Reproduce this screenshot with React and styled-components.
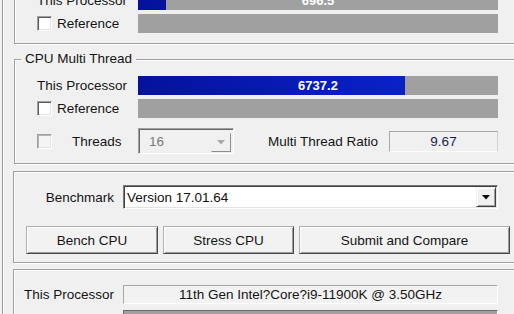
import React from 'react';
import styled, { createGlobalStyle } from 'styled-components';

const GlobalStyle = createGlobalStyle`
  html, body {
    margin: 0;
    padding: 0;
    background: #f0f0f0;
    overflow: hidden;
  }
  body {
    font-family: "Liberation Sans", Arial, sans-serif;
    font-size: 13.5px;
    color: #141414;
  }
`;

const MAX_SCORE = 9080;

const Window = styled.div`
  margin-left: 2px;
  width: 540px;
  height: 314px;
  overflow: hidden;
  border-left: 1px solid #9c9c9c;
  box-shadow: inset 1px 0 #fff;
  display: flex;
  flex-direction: column;
`;

const Sheet = styled.div`
  margin-top: -34px;
  display: flex;
  flex-direction: column;
`;

const Group = styled.fieldset`
  margin: ${p => (p.$first ? 0 : 7)}px 0 0 11px;
  padding: 9px 0 ${p => p.$pb}px 22px;
  border: 1px solid #a0a0a0;
  box-shadow: inset 1px 1px #fff, 1px 1px #fff;
  min-width: 0;
  display: flex;
  flex-direction: column;
  gap: 4px;
`;

const Caption = styled.legend`
  padding: 0 4px;
  margin-left: -16px;
  line-height: 16px;
  background: #f0f0f0;
`;

const BarRow = styled.div`
  display: grid;
  grid-template-columns: 101px 360px;
  align-items: center;
  height: 19px;
`;

const Label = styled.span`
  display: flex;
  align-items: center;
  gap: ${p => p.$gap || 5}px;
  white-space: nowrap;
`;

const Check = styled.span`
  flex: none;
  width: 13px;
  height: 13px;
  background: ${p => (p.$disabled ? '#f4f4f4' : '#fff')};
  border: 1px solid;
  border-color: #a0a0a0 #fff #fff #a0a0a0;
  box-shadow: inset 1px 1px ${p => (p.$disabled ? '#b4b4b4' : '#5c5c5c')},
    inset -1px -1px #e3e3e3;
`;

const Bar = styled.div`
  display: grid;
  height: 19px;
  background: #a0a0a0;
`;

const Fill = styled.div`
  grid-area: 1 / 1;
  justify-self: start;
  height: 100%;
  background: linear-gradient(to right, #06129c, #0a26d8);
  background-size: 360px 100%;
`;

const BarValue = styled.span`
  grid-area: 1 / 1;
  justify-self: center;
  align-self: center;
  color: #fff;
  font-weight: bold;
  font-size: 13px;
`;

const OptionRow = styled.div`
  display: grid;
  grid-template-columns: 101px 360px;
  align-items: center;
  height: 26px;
  margin-top: 6px;
`;

const OptionCell = styled.div`
  display: flex;
  align-items: center;
`;

const Combo = styled.div`
  box-sizing: border-box;
  width: 96px;
  height: 26px;
  display: flex;
  align-items: center;
  justify-content: space-between;
  padding: 0 2px 0 10px;
  border: 1px solid;
  border-color: #a0a0a0 #fff #fff #a0a0a0;
  box-shadow: inset 1px 1px #696969;
  color: #7a7a7a;
`;

const ComboButton = styled.span`
  box-sizing: border-box;
  width: 20px;
  height: 19px;
  margin-top: 2px;
  display: flex;
  align-items: center;
  justify-content: center;
  border: 1px solid;
  border-color: #f0f0f0 #8c8c8c #8c8c8c #f0f0f0;
  background: ${p => (p.$disabled ? '#f0f0f0' : '#f0f0f0')};
`;

const RatioLabel = styled.span`
  margin-left: auto;
  margin-right: 11px;
  white-space: nowrap;
`;

const RatioBox = styled.div`
  box-sizing: border-box;
  width: 109px;
  height: 21px;
  display: flex;
  align-items: center;
  justify-content: center;
  border: 1px solid;
  border-color: #a8a8a8 #d0d0d0 #fff #a8a8a8;
  color: #1d1d4c;
`;

const Panel = styled.div`
  margin: ${p => p.$mt}px 0 0 10px;
  padding: ${p => p.$pt}px 0 ${p => p.$pb}px 0;
  border: 1px solid #a0a0a0;
  box-shadow: inset 1px 1px #fff, 1px 1px #fff;
  display: flex;
  flex-direction: column;
  gap: ${p => p.$gap || 0}px;
`;

const FieldRow = styled.div`
  display: grid;
  grid-template-columns: 100px 375px;
  column-gap: 9px;
  align-items: center;
  height: ${p => p.$h}px;
`;

const FieldLabel = styled.span`
  text-align: right;
  white-space: nowrap;
`;

const Select = styled.div`
  box-sizing: border-box;
  height: 24px;
  display: flex;
  align-items: center;
  justify-content: space-between;
  padding: 0 1px 0 3px;
  background: #fff;
  border: 1px solid;
  border-color: #7a7a7a #fff #fff #7a7a7a;
  box-shadow: inset 1px 1px #404040, inset -1px -1px #e3e3e3;
  color: #111;
`;

const SelectButton = styled.span`
  box-sizing: border-box;
  width: 20px;
  height: 20px;
  display: flex;
  align-items: center;
  justify-content: center;
  background: #f0f0f0;
  border: 1px solid;
  border-color: #f0f0f0 #404040 #404040 #f0f0f0;
  box-shadow: inset 1px 1px #fff, inset -1px -1px #a0a0a0;
`;

const ButtonRow = styled.div`
  display: flex;
  gap: 5px;
  margin: 17px 0 0 12px;
`;

const Button = styled.button`
  box-sizing: border-box;
  width: ${p => p.$w}px;
  height: 28px;
  padding: 0;
  font: inherit;
  color: #141414;
  background: #f2f2f2;
  border: 1px solid;
  border-color: #b0b0b0 #4a4a4a #4a4a4a #b0b0b0;
  box-shadow: inset 1px 1px #fff, inset -1px -1px #9a9a9a;
`;

const InfoField = styled.div`
  box-sizing: border-box;
  height: 19px;
  display: flex;
  align-items: center;
  justify-content: center;
  background: ${p => (p.$gray ? '#a0a0a0' : '#f2f2f2')};
  border: 1px solid;
  border-color: ${p =>
    p.$gray ? '#6a6a6a #fff #fff #6a6a6a' : '#a8a8a8 #fff #fff #a8a8a8'};
  color: #141414;
`;

const Arrow = ({ color }) => (
  <svg width="8" height="5" viewBox="0 0 8 5">
    <polygon points="0,0 8,0 4,4.5" fill={color} />
  </svg>
);

const ScoreRow = ({ label, value }) => (
  <BarRow>
    <Label>{label}</Label>
    <Bar>
      <Fill style={{ width: `${(value / MAX_SCORE) * 100}%` }} />
      <BarValue>{value.toFixed(1)}</BarValue>
    </Bar>
  </BarRow>
);

const ReferenceRow = () => (
  <BarRow>
    <Label>
      <Check />
      Reference
    </Label>
    <Bar />
  </BarRow>
);

export default function App() {
  return (
    <>
      <GlobalStyle />
      <Window>
        <Sheet>
          <Group $first $pb={10}>
            <Caption>CPU Single Thread</Caption>
            <ScoreRow label="This Processor" value={696.5} />
            <ReferenceRow />
          </Group>

          <Group $pb={9}>
            <Caption>CPU Multi Thread</Caption>
            <ScoreRow label="This Processor" value={6737.2} />
            <ReferenceRow />
            <OptionRow>
              <Label $gap={20}>
                <Check $disabled />
                Threads
              </Label>
              <OptionCell>
                <Combo>
                  16
                  <ComboButton $disabled>
                    <Arrow color="#a8a8a8" />
                  </ComboButton>
                </Combo>
                <RatioLabel>Multi Thread Ratio</RatioLabel>
                <RatioBox>9.67</RatioBox>
              </OptionCell>
            </OptionRow>
          </Group>

          <Panel $mt={7} $pt={13} $pb={8}>
            <FieldRow $h={24}>
              <FieldLabel>Benchmark</FieldLabel>
              <Select>
                Version 17.01.64
                <SelectButton>
                  <Arrow color="#000" />
                </SelectButton>
              </Select>
            </FieldRow>
            <ButtonRow>
              <Button $w={132}>Bench CPU</Button>
              <Button $w={131}>Stress CPU</Button>
              <Button $w={211}>Submit and Compare</Button>
            </ButtonRow>
          </Panel>

          <Panel $mt={6} $pt={15} $pb={8} $gap={6}>
            <FieldRow $h={19}>
              <FieldLabel>This Processor</FieldLabel>
              <InfoField>11th Gen Intel?Core?i9-11900K @ 3.50GHz</InfoField>
            </FieldRow>
            <FieldRow $h={19}>
              <FieldLabel>Reference</FieldLabel>
              <InfoField $gray />
            </FieldRow>
          </Panel>
        </Sheet>
      </Window>
    </>
  );
}
